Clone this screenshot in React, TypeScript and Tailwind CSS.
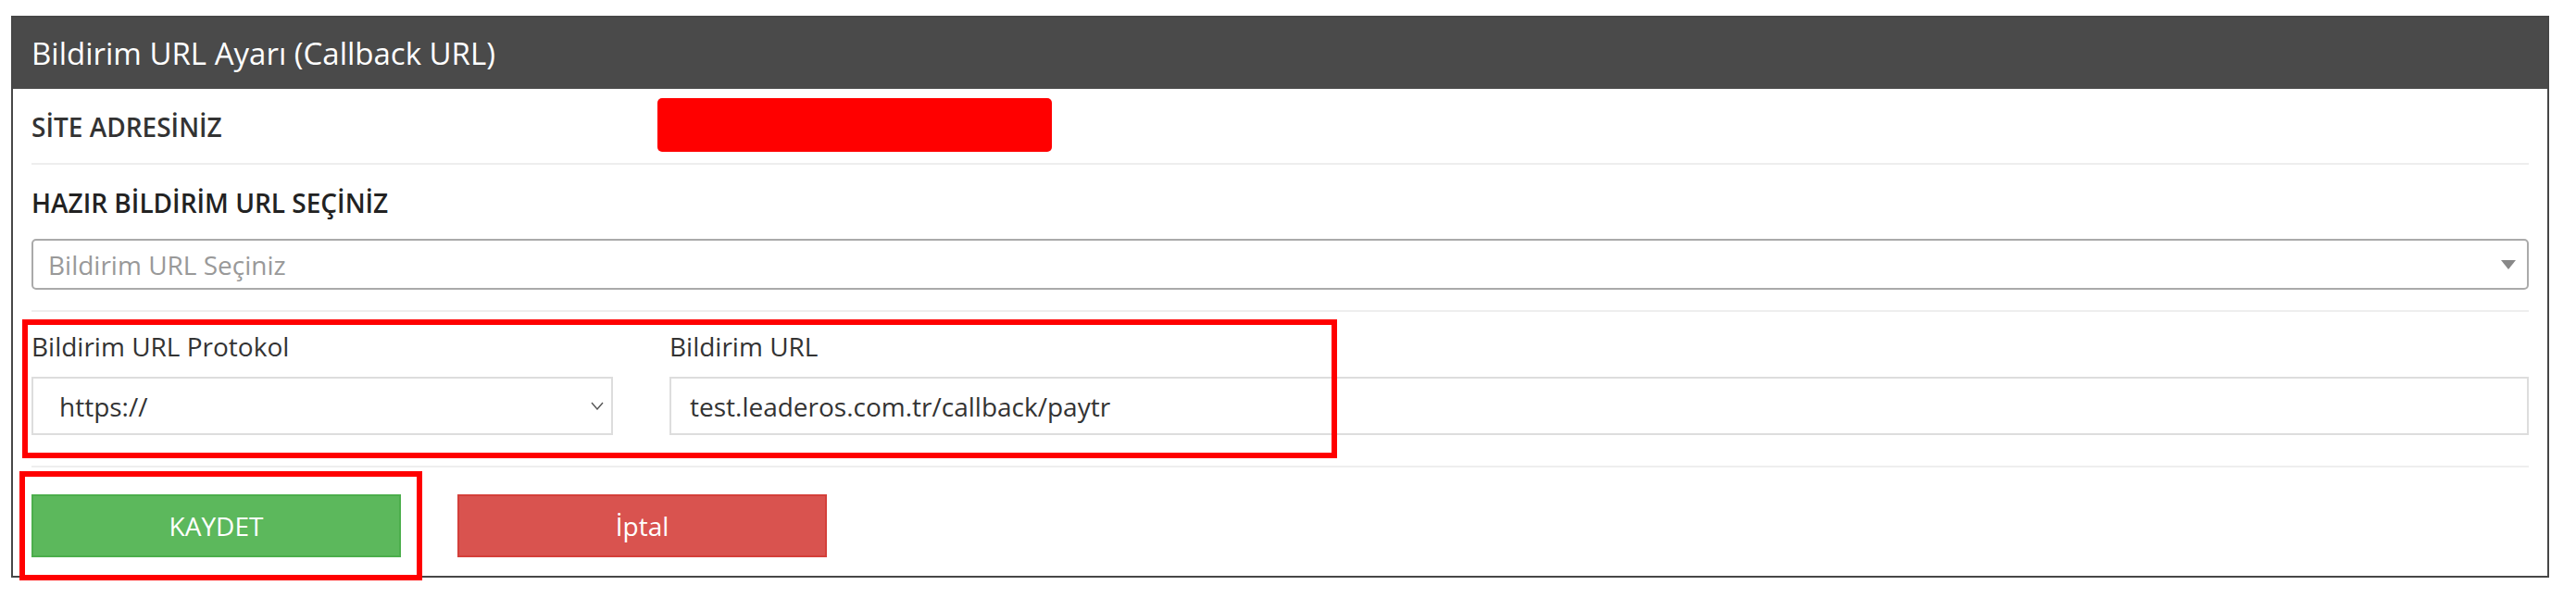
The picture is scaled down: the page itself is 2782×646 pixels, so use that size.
// Callback URL settings panel: header, site address row, preset select,
// protocol + URL fields and the save / cancel buttons.

const font = { fontFamily: '"Open Sans", "Noto Sans", sans-serif' };

function Divider() {
  return <div className="h-[2px] bg-[#eeeeee]" />;
}

function CaretDown() {
  return (
    <svg width="16" height="10" viewBox="0 0 16 10">
      <path d="M0 0 L16 0 L8 10 Z" fill="#888888" />
    </svg>
  );
}

function ChevronDown() {
  return (
    <svg width="14" height="9" viewBox="0 0 14 9" fill="none">
      <path d="M1 1 L7 8 L13 1" stroke="#555555" strokeWidth="1.4" />
    </svg>
  );
}

export default function App() {
  return (
    <div className="min-h-screen bg-white pt-[17px] pl-[12px] pr-[29px]" style={font}>
      <div className="border-2 border-[#474747] bg-white">
        {/* Header */}
        <div className="h-[77px] bg-[#4a4a4a] flex items-center px-[20px]">
          <h1 className="text-[33px] leading-none text-white font-normal">
            Bildirim URL Ayarı (Callback URL)
          </h1>
        </div>

        <div className="px-[20px]">
          {/* Site address */}
          <div className="h-[80px] flex items-center">
            <div className="w-[676px] text-[28px] font-semibold text-[#333333] pt-[2px]">
              SİTE ADRESİNİZ
            </div>
            <div className="w-[426px] h-[58px] rounded-[5px] bg-[#ff0000] -mt-[2px]" />
          </div>
          <Divider />

          {/* Preset callback URL */}
          <div className="pt-[22px] pb-[22px]">
            <div className="text-[28px] leading-[38px] font-semibold text-[#222222]">
              HAZIR BİLDİRİM URL SEÇİNİZ
            </div>
            <div className="mt-[20px] h-[55px] border-2 border-[#aaaaaa] rounded-[5px] pl-[16px] pr-[12px] flex items-center justify-between">
              <span className="text-[28px] text-[#999999]">Bildirim URL Seçiniz</span>
              <CaretDown />
            </div>
          </div>
          <Divider />

          {/* Protocol + URL */}
          <div className="relative pt-[18px] pb-[33px] flex gap-[61px]">
            <div className="w-[628px]">
              <div className="text-[28px] leading-[38px] text-[#333333]">Bildirim URL Protokol</div>
              <div className="mt-[14px] h-[63px] border-2 border-[#dddddd] pl-[28px] pr-[8px] flex items-center justify-between">
                <span className="text-[28px] text-[#333333]">https://</span>
                <ChevronDown />
              </div>
            </div>
            <div className="flex-1">
              <div className="text-[28px] leading-[38px] text-[#333333]">Bildirim URL</div>
              <div className="mt-[14px] h-[63px] border-2 border-[#dddddd] pl-[20px] flex items-center">
                <span className="text-[28px] text-[#333333]">test.leaderos.com.tr/callback/paytr</span>
              </div>
            </div>
            {/* annotation outline */}
            <div className="absolute left-[-10px] top-[8px] w-[1420px] h-[150px] border-[6px] border-[#ff0000] pointer-events-none" />
          </div>
          <Divider />

          {/* Actions */}
          <div className="relative pt-[29px] pb-[20px] flex gap-[61px]">
            <button className="w-[399px] h-[68px] bg-[#5cb85c] border-2 border-[#4cae4c] text-white text-[28px]">
              KAYDET
            </button>
            <button className="w-[399px] h-[68px] bg-[#d9534f] border-2 border-[#d43f3a] text-white text-[28px]">
              İptal
            </button>
            {/* annotation outline */}
            <div className="absolute left-[-13px] top-[4px] w-[435px] h-[118px] border-[6px] border-[#ff0000] pointer-events-none" />
          </div>
        </div>
      </div>
    </div>
  );
}
